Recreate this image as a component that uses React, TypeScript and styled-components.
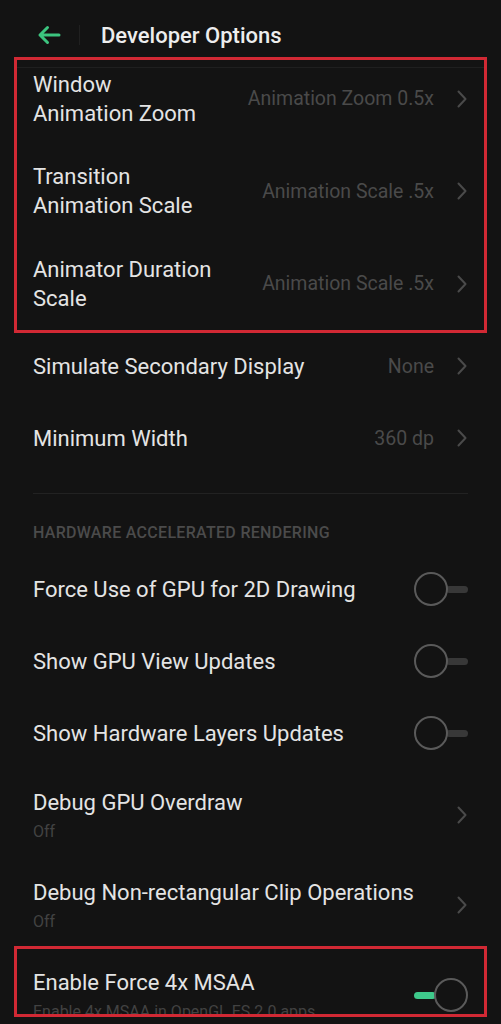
import React from 'react'
import styled, { createGlobalStyle } from 'styled-components'

const GlobalStyle = createGlobalStyle`
  html, body {
    margin: 0;
    padding: 0;
    background: #131313;
  }
  body {
    font-family: Roboto, 'Noto Sans', sans-serif;
    -webkit-font-smoothing: antialiased;
  }
`

const Screen = styled.div`
  width: 501px;
  height: 1024px;
  overflow: hidden;
  background: #131313;
  color: #e4e4e4;
`

const Header = styled.header`
  height: 44px;
  padding-top: 13px;
  display: flex;
  align-items: center;
`

const BackButton = styled.div`
  width: 80px;
  height: 44px;
  display: flex;
  align-items: center;
  padding-left: 37px;
  box-sizing: border-box;
  position: relative;

  &::after {
    content: '';
    position: absolute;
    right: 0;
    top: 12px;
    width: 1px;
    height: 20px;
    background: #202020;
  }
`

const Title = styled.h1`
  margin: 0 0 0 21px;
  font-size: 22px;
  font-weight: 500;
  color: #ededed;
`

const Highlight = styled.div<{ $clip?: boolean; $height?: number }>`
  position: relative;
  display: flow-root;
  margin: 0 14px;
  ${(p) => (p.$height ? `height: ${p.$height}px;` : '')}
  ${(p) => (p.$clip ? 'overflow: hidden;' : '')}

  &::after {
    content: '';
    position: absolute;
    inset: 0;
    border: 3px solid #d12934;
    pointer-events: none;
  }
`

const HeaderRule = styled.div`
  height: 1px;
  margin: 10px 3px 0;
  background: #1f1f1f;
`

const GroupBody = styled.div`
  display: flex;
  flex-direction: column;
  gap: 34.5px;
  padding: 1.5px 0 20.5px;
`

const Row = styled.div<{ $pt: number; $pb: number; $inset?: boolean }>`
  display: flex;
  align-items: center;
  padding: ${(p) => p.$pt}px ${(p) => (p.$inset ? 19 : 33)}px ${(p) => p.$pb}px;
`

const Texts = styled.div`
  flex: 1;
  min-width: 0;
`

const Label = styled.div`
  font-size: 22px;
  line-height: 29px;
  color: #e4e4e4;
  white-space: nowrap;
`

const Sub = styled.div`
  margin-top: 5px;
  font-size: 16px;
  line-height: 20px;
  color: #424242;
  white-space: nowrap;
`

const Value = styled.div`
  font-size: 19.5px;
  color: #4a4a4a;
  white-space: nowrap;
  margin-right: 22px;
`

const Divider = styled.div`
  height: 1px;
  margin: 19px 33px 0;
  background: #222;
`

const SectionTitle = styled.div`
  margin: 29px 33px 10px;
  font-size: 16px;
  line-height: 20px;
  font-weight: 500;
  color: #4b4b4b;
  letter-spacing: 0.3px;
`

const Track = styled.div<{ $on?: boolean }>`
  width: 54px;
  height: 24px;
  display: flex;
  align-items: center;
  flex-direction: ${(p) => (p.$on ? 'row' : 'row-reverse')};
`

const Bar = styled.div<{ $on?: boolean }>`
  flex: 1;
  height: 7px;
  border-radius: 4px;
  background: ${(p) => (p.$on ? '#3ec98b' : '#383838')};
  margin: ${(p) => (p.$on ? '0 -2px 0 0' : '0 0 0 -2px')};
`

const Knob = styled.div`
  flex: none;
  width: 30px;
  height: 30px;
  border-radius: 50%;
  border: 2px solid #5a5a5a;
  background: #131313;
  position: relative;
`

const Chevron = () => (
  <svg width="12" height="18" viewBox="0 0 12 18" fill="none">
    <path d="M2.5 1.5 L9.5 9 L2.5 16.5" stroke="#4a4a4a" strokeWidth="2" strokeLinecap="round" strokeLinejoin="round" />
  </svg>
)

const Toggle = ({ on }: { on?: boolean }) => (
  <Track $on={on}>
    <Bar $on={on} />
    <Knob />
  </Track>
)

const App = () => {
  return (
    <Screen>
      <GlobalStyle />
      <Header>
        <BackButton>
          <svg width="24" height="20" viewBox="0 0 24 20" fill="none">
            <path
              d="M22 10 H3 M10.5 2.5 L3 10 L10.5 17.5"
              stroke="#3cc47f"
              strokeWidth="3"
              strokeLinecap="round"
              strokeLinejoin="round"
            />
          </svg>
        </BackButton>
        <Title>Developer Options</Title>
      </Header>

      <Highlight>
        <HeaderRule />
        <GroupBody>
          <Row $pt={0} $pb={0} $inset>
            <Texts>
              <Label>Window</Label>
              <Label>Animation Zoom</Label>
            </Texts>
            <Value>Animation Zoom 0.5x</Value>
            <Chevron />
          </Row>
          <Row $pt={0} $pb={0} $inset>
            <Texts>
              <Label>Transition</Label>
              <Label>Animation Scale</Label>
            </Texts>
            <Value>Animation Scale .5x</Value>
            <Chevron />
          </Row>
          <Row $pt={0} $pb={0} $inset>
            <Texts>
              <Label>Animator Duration</Label>
              <Label>Scale</Label>
            </Texts>
            <Value>Animation Scale .5x</Value>
            <Chevron />
          </Row>
        </GroupBody>
      </Highlight>

      <Row $pt={18.5} $pb={21.5}>
        <Texts>
          <Label>Simulate Secondary Display</Label>
        </Texts>
        <Value>None</Value>
        <Chevron />
      </Row>
      <Row $pt={21.5} $pb={21.5}>
        <Texts>
          <Label>Minimum Width</Label>
        </Texts>
        <Value>360 dp</Value>
        <Chevron />
      </Row>

      <Divider />
      <SectionTitle>HARDWARE ACCELERATED RENDERING</SectionTitle>

      <Row $pt={21.5} $pb={21.5}>
        <Texts>
          <Label>Force Use of GPU for 2D Drawing</Label>
        </Texts>
        <Toggle />
      </Row>
      <Row $pt={21.5} $pb={21.5}>
        <Texts>
          <Label>Show GPU View Updates</Label>
        </Texts>
        <Toggle />
      </Row>
      <Row $pt={21.5} $pb={21.5}>
        <Texts>
          <Label>Show Hardware Layers Updates</Label>
        </Texts>
        <Toggle />
      </Row>
      <Row $pt={18.5} $pb={18}>
        <Texts>
          <Label>Debug GPU Overdraw</Label>
          <Sub>Off</Sub>
        </Texts>
        <Chevron />
      </Row>
      <Row $pt={18} $pb={14}>
        <Texts>
          <Label>Debug Non-rectangular Clip Operations</Label>
          <Sub>Off</Sub>
        </Texts>
        <Chevron />
      </Row>

      <Highlight $clip $height={71}>
        <Row $pt={22.5} $pb={0} $inset>
          <Texts>
            <Label>Enable Force 4x MSAA</Label>
            <Sub>Enable 4x MSAA in OpenGL ES 2.0 apps</Sub>
          </Texts>
          <Toggle on />
        </Row>
      </Highlight>
    </Screen>
  )
}

export default App
